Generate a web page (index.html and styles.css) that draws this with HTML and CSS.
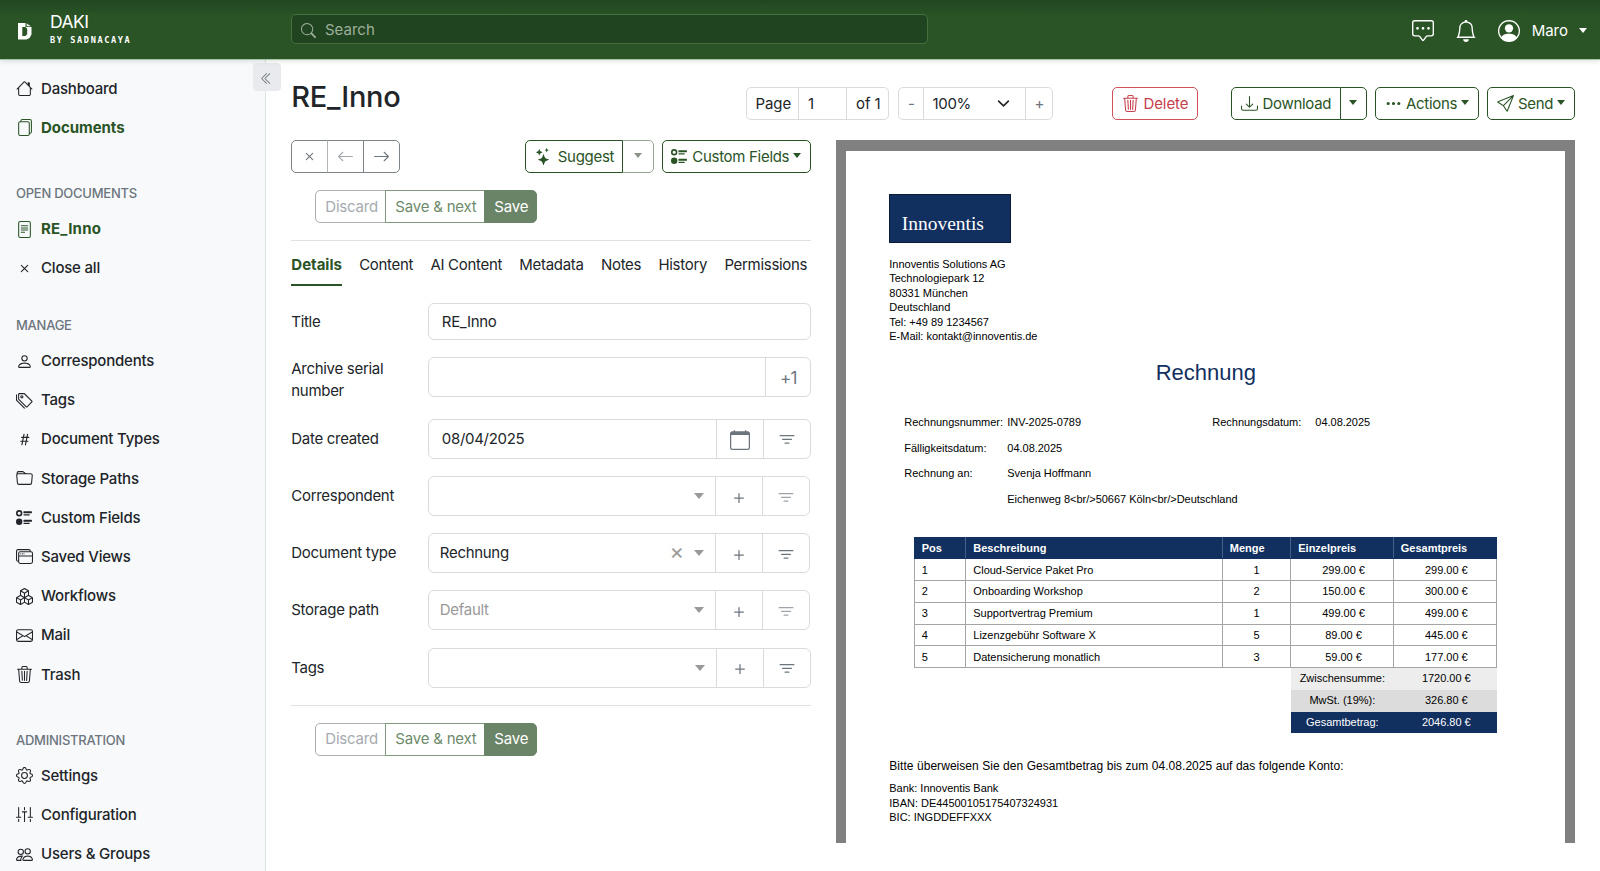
FILE: index.html
```html
<!DOCTYPE html>
<html lang="en">
<head>
<meta charset="utf-8">
<title>RE_Inno - DAKI</title>
<link rel="stylesheet" href="styles.css">
</head>
<body>
<svg class="sprite" aria-hidden="true">
  <symbol id="house" viewBox="0 0 16 16"><path d="M8.707 1.5a1 1 0 0 0-1.414 0L.646 8.146a.5.5 0 0 0 .708.708L2 8.207V13.5A1.5 1.5 0 0 0 3.5 15h9a1.500 1.500 0 0 0 1.500-1.500V8.207l.646.647a.5.5 0 0 0 .708-.708L13 5.793V2.500a.5.5 0 0 0-.5-.5h-1a.5.5 0 0 0-.5.5v1.293zM13 7.207V13.500a.5.5 0 0 1-.5.5h-9a.5.5 0 0 1-.5-.5V7.207l5-5z"/></symbol>
  <symbol id="files" viewBox="0 0 16 16"><path d="M13 0H6a2 2 0 0 0-2 2 2 2 0 0 0-2 2v10a2 2 0 0 0 2 2h7a2 2 0 0 0 2-2 2 2 0 0 0 2-2V2a2 2 0 0 0-2-2m0 13V4a2 2 0 0 0-2-2H5a1 1 0 0 1 1-1h7a1 1 0 0 1 1 1v10a1 1 0 0 1-1 1M3 4a1 1 0 0 1 1-1h7a1 1 0 0 1 1 1v10a1 1 0 0 1-1 1H4a1 1 0 0 1-1-1z"/></symbol>
  <symbol id="file-text" viewBox="0 0 16 16"><path d="M5 4a.5.5 0 0 0 0 1h6a.5.5 0 0 0 0-1zm-.5 2.500A.5.5 0 0 1 5 6h6a.5.5 0 0 1 0 1H5a.5.5 0 0 1-.5-.5M5 8a.5.5 0 0 0 0 1h6a.5.5 0 0 0 0-1zm0 2a.5.5 0 0 0 0 1h3a.5.5 0 0 0 0-1z"/><path d="M2 2a2 2 0 0 1 2-2h8a2 2 0 0 1 2 2v12a2 2 0 0 1-2 2H4a2 2 0 0 1-2-2zm10-1H4a1 1 0 0 0-1 1v12a1 1 0 0 0 1 1h8a1 1 0 0 0 1-1V2a1 1 0 0 0-1-1"/></symbol>
  <symbol id="x" viewBox="0 0 16 16"><path d="M4.646 4.646a.5.5 0 0 1 .708 0L8 7.293l2.646-2.647a.5.5 0 0 1 .708.708L8.707 8l2.647 2.646a.5.5 0 0 1-.708.708L8 8.707l-2.646 2.647a.5.5 0 0 1-.708-.708L7.293 8 4.646 5.354a.5.5 0 0 1 0-.708"/></symbol>
  <symbol id="person" viewBox="0 0 16 16"><path d="M8 8a3 3 0 1 0 0-6 3 3 0 0 0 0 6m2-3a2 2 0 1 1-4 0 2 2 0 0 1 4 0m4 8c0 1-1 1-1 1H3s-1 0-1-1 1-4 6-4 6 3 6 4m-1-.004c-.001-.246-.154-.986-.832-1.664C11.516 10.680 10.289 10 8 10s-3.516.680-4.168 1.332c-.678.678-.830 1.418-.832 1.664z"/></symbol>
  <symbol id="tags" viewBox="0 0 16 16"><path d="M3 2v4.586l7 7L14.586 9l-7-7zM2 2a1 1 0 0 1 1-1h4.586a1 1 0 0 1 .707.293l7 7a1 1 0 0 1 0 1.414l-4.586 4.586a1 1 0 0 1-1.414 0l-7-7A1 1 0 0 1 2 6.586z"/><path d="M5.500 5a.5.5 0 1 1 0-1 .5.5 0 0 1 0 1m0 1a1.500 1.500 0 1 0 0-3 1.500 1.500 0 0 0 0 3M1 7.086a1 1 0 0 0 .293.707L8.750 15.250l-.043.043a1 1 0 0 1-1.414 0l-7-7A1 1 0 0 1 0 7.586V3a1 1 0 0 1 1-1z"/></symbol>
  <symbol id="hash" viewBox="0 0 16 16"><path d="M8.390 12.648a1 1 0 0 0-.015.180c0 .305.210.508.500.508.266 0 .492-.172.555-.477l.554-2.703h1.204c.421 0 .617-.234.617-.547 0-.312-.188-.530-.617-.530h-.985l.516-2.524h1.265c.430 0 .618-.227.618-.547 0-.313-.188-.524-.618-.524h-1.046l.476-2.304a1 1 0 0 0 .016-.164.510.510 0 0 0-.516-.516.540.540 0 0 0-.539.430l-.523 2.554H7.617l.477-2.304c.008-.040.015-.118.015-.164a.510.510 0 0 0-.523-.516.540.540 0 0 0-.531.430L6.530 5.484H5.414c-.430 0-.617.220-.617.532s.187.539.617.539h.906l-.515 2.523H4.609c-.421 0-.609.219-.609.531s.188.547.610.547h.976l-.516 2.492c-.008.040-.015.125-.015.180 0 .305.210.508.500.508.265 0 .492-.172.554-.477l.555-2.703h2.242zm-1-6.109h2.266l-.515 2.563H6.859l.532-2.563z"/></symbol>
  <symbol id="folder" viewBox="0 0 16 16"><path d="M.540 3.870.500 3a2 2 0 0 1 2-2h3.672a2 2 0 0 1 1.414.586l.828.828A2 2 0 0 0 9.828 3h3.982a2 2 0 0 1 1.992 2.181l-.637 7A2 2 0 0 1 13.174 14H2.826a2 2 0 0 1-1.991-1.819l-.637-7a2 2 0 0 1 .342-1.310zM2.190 4a1 1 0 0 0-.996 1.090l.637 7a1 1 0 0 0 .995.910h10.348a1 1 0 0 0 .995-.910l.637-7A1 1 0 0 0 13.810 4zm4.690-1.707A1 1 0 0 0 6.172 2H2.500a1 1 0 0 0-1 .981l.006.139q.323-.119.684-.120h5.396z"/></symbol>
  <symbol id="ui-radios" viewBox="0 0 16 16"><path d="M7 2.500a.5.5 0 0 1 .5-.5h7a.5.5 0 0 1 .5.5v1a.5.5 0 0 1-.5.5h-7a.5.5 0 0 1-.5-.5zM0 12a3 3 0 1 1 6 0 3 3 0 0 1-6 0m7-1.500a.5.5 0 0 1 .5-.5h7a.5.5 0 0 1 .5.5v1a.5.5 0 0 1-.5.5h-7a.5.5 0 0 1-.5-.5zm0-5a.5.5 0 0 1 .5-.5h5a.5.5 0 0 1 0 1h-5a.5.5 0 0 1-.5-.5m0 8a.5.5 0 0 1 .5-.5h5a.5.5 0 0 1 0 1h-5a.5.5 0 0 1-.5-.5M3 1a3 3 0 1 0 0 6 3 3 0 0 0 0-6m0 4.500a1.500 1.500 0 1 1 0-3 1.500 1.500 0 0 1 0 3"/></symbol>
  <symbol id="window-stack" viewBox="0 0 16 16"><path d="M4.500 6a.5.5 0 1 0 0-1 .5.5 0 0 0 0 1M6 6a.5.5 0 1 0 0-1 .5.5 0 0 0 0 1m2-.5a.5.5 0 1 1-1 0 .5.5 0 0 1 1 0"/><path d="M12 1a2 2 0 0 1 2 2 2 2 0 0 1 2 2v8a2 2 0 0 1-2 2H4a2 2 0 0 1-2-2 2 2 0 0 1-2-2V3a2 2 0 0 1 2-2zM2 12V5a2 2 0 0 1 2-2h9a1 1 0 0 0-1-1H2a1 1 0 0 0-1 1v8a1 1 0 0 0 1 1m1-4v5a1 1 0 0 0 1 1h10a1 1 0 0 0 1-1V8zm12-1V5a1 1 0 0 0-1-1H4a1 1 0 0 0-1 1v2z"/></symbol>
  <symbol id="boxes" viewBox="0 0 16 16"><path d="M7.752.066a.5.5 0 0 1 .496 0l3.750 2.143a.5.5 0 0 1 .252.434v3.995l3.498 2A.5.5 0 0 1 16 9.070v4.286a.5.5 0 0 1-.252.434l-3.750 2.143a.5.5 0 0 1-.496 0l-3.502-2-3.502 2.001a.5.5 0 0 1-.496 0l-3.750-2.143A.5.5 0 0 1 0 13.357V9.071a.5.5 0 0 1 .252-.434L3.750 6.638V2.643a.5.5 0 0 1 .252-.434zM4.250 7.504 1.508 9.071l2.742 1.567 2.742-1.567zM7.500 9.933l-2.750 1.571v3.134l2.750-1.571zm1 3.134 2.750 1.571v-3.134L8.500 9.933zm.508-3.996 2.742 1.567 2.742-1.567-2.742-1.567zm2.242-2.433V3.504L8.500 5.076V8.210zM7.500 8.210V5.076L4.750 3.504v3.134zM5.258 2.643 8 4.210l2.742-1.567L8 1.076zM15 9.933l-2.750 1.571v3.134L15 13.067zM3.750 14.638v-3.134L1 9.933v3.134z"/></symbol>
  <symbol id="envelope" viewBox="0 0 16 16"><path d="M0 4a2 2 0 0 1 2-2h12a2 2 0 0 1 2 2v8a2 2 0 0 1-2 2H2a2 2 0 0 1-2-2zm2-1a1 1 0 0 0-1 1v.217l7 4.200 7-4.200V4a1 1 0 0 0-1-1zm13 2.383-4.708 2.825L15 11.105zm-.034 6.876-5.640-3.471L8 9.583l-1.326-.795-5.640 3.470A1 1 0 0 0 2 13h12a1 1 0 0 0 .966-.741M1 11.105l4.708-2.897L1 5.383z"/></symbol>
  <symbol id="trash" viewBox="0 0 16 16"><path d="M6.500 1h3a.5.5 0 0 1 .5.5v1H6v-1a.5.5 0 0 1 .5-.5M11 2.500v-1A1.500 1.500 0 0 0 9.500 0h-3A1.500 1.500 0 0 0 5 1.500v1H1.500a.5.5 0 0 0 0 1h.538l.853 10.660A2 2 0 0 0 4.885 16h6.230a2 2 0 0 0 1.994-1.840l.853-10.660h.538a.5.5 0 0 0 0-1zm1.958 1-.846 10.580a1 1 0 0 1-.997.920h-6.230a1 1 0 0 1-.997-.920L3.042 3.500zm-7.487 1a.5.5 0 0 1 .528.470l.500 8.500a.5.5 0 0 1-.998.060L5 5.030a.5.5 0 0 1 .470-.530m5.058 0a.5.5 0 0 1 .470.530l-.500 8.500a.5.5 0 1 1-.998-.060l.500-8.500a.5.5 0 0 1 .528-.470M8 4.500a.5.5 0 0 1 .5.5v8.500a.5.5 0 0 1-1 0V5a.5.5 0 0 1 .5-.5"/></symbol>
  <symbol id="gear" viewBox="0 0 16 16"><path d="M8 4.754a3.246 3.246 0 1 0 0 6.492 3.246 3.246 0 0 0 0-6.492M5.754 8a2.246 2.246 0 1 1 4.492 0 2.246 2.246 0 0 1-4.492 0"/><path d="M9.796 1.343c-.527-1.790-3.065-1.790-3.592 0l-.094.319a.873.873 0 0 1-1.255.520l-.292-.160c-1.640-.892-3.433.902-2.540 2.541l.159.292a.873.873 0 0 1-.520 1.255l-.319.094c-1.790.527-1.790 3.065 0 3.592l.319.094a.873.873 0 0 1 .520 1.255l-.160.292c-.892 1.640.901 3.434 2.541 2.540l.292-.159a.873.873 0 0 1 1.255.520l.094.319c.527 1.790 3.065 1.790 3.592 0l.094-.319a.873.873 0 0 1 1.255-.520l.292.160c1.640.893 3.434-.902 2.540-2.541l-.159-.292a.873.873 0 0 1 .520-1.255l.319-.094c1.790-.527 1.790-3.065 0-3.592l-.319-.094a.873.873 0 0 1-.520-1.255l.160-.292c.893-1.640-.902-3.433-2.541-2.540l-.292.159a.873.873 0 0 1-1.255-.520zm-2.633.283c.246-.835 1.428-.835 1.674 0l.094.319a1.873 1.873 0 0 0 2.693 1.115l.291-.160c.764-.415 1.600.420 1.184 1.185l-.159.292a1.873 1.873 0 0 0 1.116 2.692l.318.094c.835.246.835 1.428 0 1.674l-.319.094a1.873 1.873 0 0 0-1.115 2.693l.160.291c.415.764-.420 1.600-1.185 1.184l-.291-.159a1.873 1.873 0 0 0-2.693 1.116l-.094.318c-.246.835-1.428.835-1.674 0l-.094-.319a1.873 1.873 0 0 0-2.692-1.115l-.292.160c-.764.415-1.600-.420-1.184-1.185l.159-.291A1.873 1.873 0 0 0 1.945 8.930l-.319-.094c-.835-.246-.835-1.428 0-1.674l.319-.094A1.873 1.873 0 0 0 3.060 4.377l-.160-.292c-.415-.764.420-1.600 1.185-1.184l.292.159a1.873 1.873 0 0 0 2.692-1.115z"/></symbol>
  <symbol id="sliders" viewBox="0 0 16 16"><path d="M0 10.500a.5.5 0 0 0 .5.5h4a.5.5 0 0 0 0-1H3V1.500a.5.5 0 0 0-1 0V10H.5a.5.5 0 0 0-.5.5M2.500 12a.5.5 0 0 0-.5.5v2a.5.5 0 0 0 1 0v-2a.5.5 0 0 0-.5-.5m3-6.500A.5.5 0 0 0 6 6h1.500v8.500a.5.5 0 0 0 1 0V6H10a.5.5 0 0 0 0-1H6a.5.5 0 0 0-.5.5M8 1a.5.5 0 0 0-.5.5v2a.5.5 0 0 0 1 0v-2A.5.5 0 0 0 8 1m3 9.500a.5.5 0 0 0 .5.5h4a.5.5 0 0 0 0-1H14V1.500a.5.5 0 0 0-1 0V10h-1.500a.5.5 0 0 0-.5.5m2.500 1.500a.5.5 0 0 0-.5.5v2a.5.5 0 0 0 1 0v-2a.5.5 0 0 0-.5-.5"/></symbol>
  <symbol id="people" viewBox="0 0 16 16"><path d="M15 14s1 0 1-1-1-4-5-4-5 3-5 4 1 1 1 1zm-7.978-1L7 12.996c.001-.264.167-1.030.760-1.720C8.312 10.629 9.282 10 11 10c1.717 0 2.687.630 3.240 1.276.593.690.758 1.457.760 1.720l-.008.002-.014.002zM11 7a2 2 0 1 0 0-4 2 2 0 0 0 0 4m3-2a3 3 0 1 1-6 0 3 3 0 0 1 6 0M6.936 9.280a6 6 0 0 0-1.230-.247A7 7 0 0 0 5 9c-4 0-5 3-5 4q0 1 1 1h4.216A2.240 2.240 0 0 1 5 13c0-1.010.377-2.042 1.090-2.904.243-.294.526-.569.846-.816M4.920 10A5.500 5.500 0 0 0 4 13H1c0-.260.164-1.030.760-1.724.545-.636 1.492-1.256 3.160-1.275ZM1.500 5.500a3 3 0 1 1 6 0 3 3 0 0 1-6 0m3-2a2 2 0 1 0 0 4 2 2 0 0 0 0-4"/></symbol>
  <symbol id="chevrons" viewBox="0 0 16 16"><path d="M8.354 1.646a.5.5 0 0 1 0 .708L2.707 8l5.647 5.646a.5.5 0 0 1-.708.708l-6-6a.5.5 0 0 1 0-.708l6-6a.5.5 0 0 1 .708 0"/><path d="M12.354 1.646a.5.5 0 0 1 0 .708L6.707 8l5.647 5.646a.5.5 0 0 1-.708.708l-6-6a.5.5 0 0 1 0-.708l6-6a.5.5 0 0 1 .708 0"/></symbol>
  <symbol id="search" viewBox="0 0 16 16"><path d="M11.742 10.344a6.500 6.500 0 1 0-1.397 1.398h-.001q.044.060.098.115l3.850 3.850a1 1 0 0 0 1.415-1.414l-3.850-3.850a1 1 0 0 0-.115-.100zM12 6.500a5.500 5.500 0 1 1-11 0 5.500 5.500 0 0 1 11 0"/></symbol>
  <symbol id="chat" viewBox="0 0 16 16"><path d="M14 1a1 1 0 0 1 1 1v8a1 1 0 0 1-1 1h-2.500a2 2 0 0 0-1.600.800L8 14.333 6.100 11.800a2 2 0 0 0-1.600-.800H2a1 1 0 0 1-1-1V2a1 1 0 0 1 1-1zM2 0a2 2 0 0 0-2 2v8a2 2 0 0 0 2 2h2.500a1 1 0 0 1 .800.400l1.900 2.533a1 1 0 0 0 1.600 0l1.900-2.533a1 1 0 0 1 .800-.400H14a2 2 0 0 0 2-2V2a2 2 0 0 0-2-2z"/><path d="M5 6a1 1 0 1 1-2 0 1 1 0 0 1 2 0m4 0a1 1 0 1 1-2 0 1 1 0 0 1 2 0m4 0a1 1 0 1 1-2 0 1 1 0 0 1 2 0"/></symbol>
  <symbol id="bell" viewBox="0 0 16 16"><path d="M8 16a2 2 0 0 0 2-2H6a2 2 0 0 0 2 2M8 1.918l-.797.161A4 4 0 0 0 4 6c0 .628-.134 2.197-.459 3.742-.160.767-.376 1.566-.663 2.258h10.244c-.287-.692-.502-1.490-.663-2.258C12.134 8.197 12 6.628 12 6a4 4 0 0 0-3.203-3.920zM14.220 12c.223.447.481.801.780 1H1c.299-.199.557-.553.780-1C2.680 10.200 3 6.880 3 6c0-2.420 1.720-4.440 4.005-4.901a1 1 0 1 1 1.990 0A5 5 0 0 1 13 6c0 .880.320 4.200 1.220 6"/></symbol>
  <symbol id="person-circle" viewBox="0 0 16 16"><path d="M11 6a3 3 0 1 1-6 0 3 3 0 0 1 6 0"/><path fill-rule="evenodd" d="M0 8a8 8 0 1 1 16 0A8 8 0 0 1 0 8m8-7a7 7 0 0 0-5.468 11.370C3.242 11.226 4.805 10 8 10s4.757 1.225 5.468 2.370A7 7 0 0 0 8 1"/></symbol>
  <symbol id="arrow-left" viewBox="0 0 16 16"><path fill-rule="evenodd" d="M15 8a.5.5 0 0 0-.5-.5H2.707l3.147-3.146a.5.5 0 1 0-.708-.708l-4 4a.5.5 0 0 0 0 .708l4 4a.5.5 0 0 0 .708-.708L2.707 8.500H14.500A.5.5 0 0 0 15 8"/></symbol>
  <symbol id="arrow-right" viewBox="0 0 16 16"><path fill-rule="evenodd" d="M1 8a.5.5 0 0 1 .5-.5h11.793l-3.147-3.146a.5.5 0 0 1 .708-.708l4 4a.5.5 0 0 1 0 .708l-4 4a.5.5 0 0 1-.708-.708L13.293 8.500H1.500A.5.5 0 0 1 1 8"/></symbol>
  <symbol id="stars" viewBox="0 0 16 16"><path d="M7.657 6.247c.110-.330.576-.330.686 0l.645 1.937a2.890 2.890 0 0 0 1.829 1.828l1.936.645c.330.110.330.576 0 .686l-1.937.645a2.890 2.890 0 0 0-1.828 1.829l-.645 1.936a.361.361 0 0 1-.686 0l-.645-1.937a2.890 2.890 0 0 0-1.828-1.828l-1.937-.645a.361.361 0 0 1 0-.686l1.937-.645a2.890 2.890 0 0 0 1.828-1.828zM3.794 1.148a.217.217 0 0 1 .412 0l.387 1.162c.173.518.579.924 1.097 1.097l1.162.387a.217.217 0 0 1 0 .412l-1.162.387A1.730 1.730 0 0 0 4.593 5.690l-.387 1.162a.217.217 0 0 1-.412 0L3.407 5.690A1.730 1.730 0 0 0 2.310 4.593l-1.162-.387a.217.217 0 0 1 0-.412l1.162-.387A1.730 1.730 0 0 0 3.407 2.310zM10.863.099a.145.145 0 0 1 .274 0l.258.774c.115.346.386.617.732.732l.774.258a.145.145 0 0 1 0 .274l-.774.258a1.160 1.160 0 0 0-.732.732l-.258.774a.145.145 0 0 1-.274 0l-.258-.774a1.160 1.160 0 0 0-.732-.732L9.100 2.137a.145.145 0 0 1 0-.274l.774-.258c.346-.115.617-.386.732-.732z"/></symbol>
  <symbol id="download" viewBox="0 0 16 16"><path d="M.5 9.900a.5.5 0 0 1 .5.5v2.500a1 1 0 0 0 1 1h12a1 1 0 0 0 1-1v-2.500a.5.5 0 0 1 1 0v2.500a2 2 0 0 1-2 2H2a2 2 0 0 1-2-2v-2.500a.5.5 0 0 1 .5-.5"/><path d="M7.646 11.854a.5.5 0 0 0 .708 0l3-3a.5.5 0 0 0-.708-.708L8.500 10.293V1.500a.5.5 0 0 0-1 0v8.793L5.354 8.146a.5.5 0 1 0-.708.708z"/></symbol>
  <symbol id="dots" viewBox="0 0 16 16"><path d="M3 9.500a1.500 1.500 0 1 1 0-3 1.500 1.500 0 0 1 0 3m5 0a1.500 1.500 0 1 1 0-3 1.500 1.500 0 0 1 0 3m5 0a1.500 1.500 0 1 1 0-3 1.500 1.500 0 0 1 0 3"/></symbol>
  <symbol id="send" viewBox="0 0 16 16"><path d="M15.854.146a.5.5 0 0 1 .110.540l-5.819 14.547a.750.750 0 0 1-1.329.124l-3.178-4.995L.643 7.184a.750.750 0 0 1 .124-1.330L15.314.037a.5.5 0 0 1 .540.110ZM6.636 10.070l2.761 4.338L14.130 2.576zm6.787-8.201L1.591 6.602l4.339 2.760z"/></symbol>
  <symbol id="calendar" viewBox="0 0 16 16"><path d="M3.500 0a.5.5 0 0 1 .5.5V1h8V.5a.5.5 0 0 1 1 0V1h1a2 2 0 0 1 2 2v11a2 2 0 0 1-2 2H2a2 2 0 0 1-2-2V3a2 2 0 0 1 2-2h1V.5a.5.5 0 0 1 .5-.5M1 4v10a1 1 0 0 0 1 1h12a1 1 0 0 0 1-1V4z"/></symbol>
  <symbol id="filter" viewBox="0 0 16 16"><path d="M6 10.500a.5.5 0 0 1 .5-.5h3a.5.5 0 0 1 0 1h-3a.5.5 0 0 1-.5-.5m-2-3a.5.5 0 0 1 .5-.5h7a.5.5 0 0 1 0 1h-7a.5.5 0 0 1-.5-.5m-2-3a.5.5 0 0 1 .5-.5h11a.5.5 0 0 1 0 1h-11a.5.5 0 0 1-.5-.5"/></symbol>
  <symbol id="plus" viewBox="0 0 16 16"><path d="M8 4a.5.5 0 0 1 .5.5v3h3a.5.5 0 0 1 0 1h-3v3a.5.5 0 0 1-1 0v-3h-3a.5.5 0 0 1 0-1h3v-3A.5.5 0 0 1 8 4"/></symbol>
  <symbol id="chevron-down" viewBox="0 0 16 16"><path fill="none" stroke="currentColor" stroke-width="2" stroke-linecap="round" stroke-linejoin="round" d="m2 5 6 6 6-6"/></symbol>
</svg>

<header class="topbar">
  <a class="brand">
    <svg class="brand-mark" viewBox="0 0 14 18"><path fill="#fff" fill-rule="evenodd" d="M0 1h7.500v4h6v7.500l-2 3.500-3 1.500H0zM4.300 5v9h3l1.900-1.800V6.800L7.500 5z"/><path fill="#e3ebe2" d="M8.600 1.200 13 4.300H8.600z"/></svg>
    <span class="brand-text"><span class="brand-name">DAKI</span><span class="brand-by">BY SADNACAYA</span></span>
  </a>
  <div class="search"><svg class="icon"><use href="#search"/></svg><span>Search</span></div>
  <div class="top-actions">
    <svg class="icon-lg"><use href="#chat"/></svg>
    <svg class="icon-lg"><use href="#bell"/></svg>
    <div class="user"><svg class="icon-lg"><use href="#person-circle"/></svg><span>Maro</span><i class="caret"></i></div>
  </div>
</header>

<div class="shell">
  <nav class="sidebar">
    <button class="collapse"><svg class="icon"><use href="#chevrons"/></svg></button>
    <ul>
      <li><svg class="icon"><use href="#house"/></svg><span>Dashboard</span></li>
      <li class="active"><svg class="icon"><use href="#files"/></svg><span>Documents</span></li>
    </ul>
    <h6 class="head-open">Open documents</h6>
    <ul>
      <li class="active wide"><svg class="icon"><use href="#file-text"/></svg><span>RE_Inno</span></li>
      <li><svg class="icon"><use href="#x"/></svg><span>Close all</span></li>
    </ul>
    <h6 class="head-manage">Manage</h6>
    <ul>
      <li><svg class="icon"><use href="#person"/></svg><span>Correspondents</span></li>
      <li><svg class="icon"><use href="#tags"/></svg><span>Tags</span></li>
      <li><svg class="icon"><use href="#hash"/></svg><span>Document Types</span></li>
      <li><svg class="icon"><use href="#folder"/></svg><span>Storage Paths</span></li>
      <li><svg class="icon"><use href="#ui-radios"/></svg><span>Custom Fields</span></li>
      <li><svg class="icon"><use href="#window-stack"/></svg><span>Saved Views</span></li>
      <li><svg class="icon"><use href="#boxes"/></svg><span>Workflows</span></li>
      <li><svg class="icon"><use href="#envelope"/></svg><span>Mail</span></li>
      <li><svg class="icon"><use href="#trash"/></svg><span>Trash</span></li>
    </ul>
    <h6 class="head-admin">Administration</h6>
    <ul>
      <li><svg class="icon"><use href="#gear"/></svg><span>Settings</span></li>
      <li><svg class="icon"><use href="#sliders"/></svg><span>Configuration</span></li>
      <li><svg class="icon"><use href="#people"/></svg><span>Users &amp; Groups</span></li>
    </ul>
  </nav>

  <main>
    <div class="page-head">
      <h1>RE_Inno</h1>
      <div class="group page-group"><span class="cell w-page">Page</span><span class="cell w-num">1</span><span class="cell w-of">of 1</span></div>
      <div class="group zoom-group"><span class="cell w-minus muted">-</span><span class="cell w-zoom">100%<svg class="chev"><use href="#chevron-down"/></svg></span><span class="cell w-plus muted">+</span></div>
      <button class="btn danger w-delete"><svg class="icon"><use href="#trash"/></svg>Delete</button>
      <div class="btn-group dl"><button class="btn w-download"><svg class="icon"><use href="#download"/></svg>Download</button><button class="btn w-split"><i class="caret"></i></button></div>
      <button class="btn w-actions"><svg class="icon"><use href="#dots"/></svg>Actions<i class="caret"></i></button>
      <button class="btn w-send"><svg class="icon"><use href="#send"/></svg>Send<i class="caret"></i></button>
    </div>

    <div class="columns">
      <section class="details">
        <div class="tools">
          <div class="btn-group nav-group"><button class="btn gray"><svg class="icon"><use href="#x"/></svg></button><button class="btn gray off"><svg class="icon"><use href="#arrow-left"/></svg></button><button class="btn gray"><svg class="icon"><use href="#arrow-right"/></svg></button></div>
          <div class="btn-group suggest-group"><button class="btn w-suggest"><svg class="icon"><use href="#stars"/></svg>Suggest</button><button class="btn w-sugsplit off-gray"><i class="caret"></i></button></div>
          <button class="btn w-fields"><svg class="icon"><use href="#ui-radios"/></svg>Custom Fields<i class="caret"></i></button>
        </div>
        <div class="btn-group save-group"><button class="btn discard">Discard</button><button class="btn save-next">Save &amp; next</button><button class="btn save">Save</button></div>
        <div class="tabs"><a class="on">Details</a><a>Content</a><a>AI Content</a><a>Metadata</a><a>Notes</a><a>History</a><a>Permissions</a></div>

        <div class="form">
          <label>Title</label>
          <div class="field short"><span class="value">RE_Inno</span></div>
          <label>Archive serial number</label>
          <div class="field asn"><span class="value"></span><span class="add big">+1</span></div>
          <label>Date created</label>
          <div class="field"><span class="value">08/04/2025</span><span class="add"><svg class="icon-cal"><use href="#calendar"/></svg></span><span class="add"><svg class="icon-f"><use href="#filter"/></svg></span></div>
          <label>Correspondent</label>
          <div class="field select"><span class="value"></span><i class="tri"></i><span class="add"><svg class="icon-f"><use href="#plus"/></svg></span><span class="add faded"><svg class="icon-f"><use href="#filter"/></svg></span></div>
          <label>Document type</label>
          <div class="field select"><span class="value">Rechnung</span><span class="clear">×</span><i class="tri"></i><span class="add"><svg class="icon-f"><use href="#plus"/></svg></span><span class="add"><svg class="icon-f"><use href="#filter"/></svg></span></div>
          <label>Storage path</label>
          <div class="field select"><span class="value placeholder">Default</span><i class="tri"></i><span class="add"><svg class="icon-f"><use href="#plus"/></svg></span><span class="add faded"><svg class="icon-f"><use href="#filter"/></svg></span></div>
          <label>Tags</label>
          <div class="field"><span class="value"></span><i class="tri"></i><span class="add"><svg class="icon-f"><use href="#plus"/></svg></span><span class="add"><svg class="icon-f"><use href="#filter"/></svg></span></div>
        </div>
        <div class="btn-group save-group bottom"><button class="btn discard">Discard</button><button class="btn save-next">Save &amp; next</button><button class="btn save">Save</button></div>
      </section>

      <section class="viewer">
        <article class="sheet">
          <div class="logo">Innoventis</div>
          <p class="address">Innoventis Solutions AG<br>Technologiepark 12<br>80331 München<br>Deutschland<br>Tel: +49 89 1234567<br>E-Mail: kontakt@innoventis.de</p>
          <h2>Rechnung</h2>
          <div class="meta">
            <span>Rechnungsnummer:</span><span>INV-2025-0789</span><span>Rechnungsdatum:</span><span>04.08.2025</span>
            <span>Fälligkeitsdatum:</span><span class="rest">04.08.2025</span>
            <span>Rechnung an:</span><span class="rest">Svenja Hoffmann</span>
            <span></span><span class="rest">Eichenweg 8&lt;br/&gt;50667 Köln&lt;br/&gt;Deutschland</span>
          </div>
          <table>
            <colgroup><col class="c1"><col class="c2"><col class="c3"><col class="c4"><col class="c5"></colgroup>
            <tr><th>Pos</th><th>Beschreibung</th><th>Menge</th><th>Einzelpreis</th><th>Gesamtpreis</th></tr>
            <tr><td>1</td><td>Cloud-Service Paket Pro</td><td>1</td><td>299.00 €</td><td>299.00 €</td></tr>
            <tr><td>2</td><td>Onboarding Workshop</td><td>2</td><td>150.00 €</td><td>300.00 €</td></tr>
            <tr><td>3</td><td>Supportvertrag Premium</td><td>1</td><td>499.00 €</td><td>499.00 €</td></tr>
            <tr><td>4</td><td>Lizenzgebühr Software X</td><td>5</td><td>89.00 €</td><td>445.00 €</td></tr>
            <tr><td>5</td><td>Datensicherung monatlich</td><td>3</td><td>59.00 €</td><td>177.00 €</td></tr>
          </table>
          <div class="sums">
            <div class="s1"><span>Zwischensumme:</span><span>1720.00 €</span></div>
            <div class="s2"><span>MwSt. (19%):</span><span>326.80 €</span></div>
            <div class="s3"><span>Gesamtbetrag:</span><span>2046.80 €</span></div>
          </div>
          <p class="pay">Bitte überweisen Sie den Gesamtbetrag bis zum 04.08.2025 auf das folgende Konto:</p>
          <p class="bank">Bank: Innoventis Bank<br>IBAN: DE44500105175407324931<br>BIC: INGDDEFFXXX</p>
        </article>
      </section>
    </div>
  </main>
</div>
</body>
</html>
```
FILE: styles.css
```css
* { box-sizing: border-box; }
body { margin: 0; width: 1600px; height: 871px; overflow: hidden; background: #fff; color: #212529; font: 15px/22px Inter, sans-serif; letter-spacing: -.3px; }
ul, h1, h2, h6, p { margin: 0; padding: 0; }
.sprite { display: none; }
svg { fill: currentColor; flex: none; }
.icon { width: 17px; height: 17px; }
.icon-lg { width: 22px; height: 22px; }
.caret { flex: none; width: 0; height: 0; border: 4.5px solid transparent; border-width: 5px 4.700px 0; border-top-color: currentColor; }
button { font: inherit; letter-spacing: inherit; margin: 0; }

.topbar { height: 60px; display: flex; align-items: center; background: linear-gradient(#214620 0, #2a5426 16px); border-bottom: 1px solid #a9c6a8; color: #fff; box-shadow: 0 1px 5px rgba(42, 84, 38, .18); position: relative; z-index: 2; }
.brand { width: 291px; padding-left: 18px; display: flex; align-items: center; }
.brand-mark { width: 14px; height: 18px; margin-top: 2px; }
.brand-text { margin: 1px 0 0 18px; display: flex; flex-direction: column; }
.brand-name { font-size: 17.500px; line-height: 20px; letter-spacing: -.550px; }
.brand-by { font: 8.600px/17px "DejaVu Sans Mono", monospace; font-weight: 700; letter-spacing: 1.600px; }
.search { width: 637px; height: 30px; margin-top: -2px; padding: 0 9px; display: flex; align-items: center; gap: 9px; border: 1px solid #44703f; border-radius: 5px; background: #214420; color: #9cae9b; letter-spacing: 0; }
.search .icon { width: 15px; height: 15px; margin-top: 3px; }
.search span { margin-top: 2px; }
.top-actions { margin: 2px 0 0 auto; padding-right: 13px; display: flex; align-items: center; gap: 21px; }
.user { display: flex; align-items: center; gap: 12px; }
.user span { letter-spacing: 0; }
.user .caret { margin-left: -1px; }

.shell { display: flex; height: 811px; }
.sidebar { position: relative; width: 266px; flex: none; padding-top: 9px; background: #f8f9fb; border-right: 1px solid #dfe3e0; font-weight: 500; }
.sidebar ul { list-style: none; }
.sidebar li { height: 39.200px; padding-left: 16px; display: flex; align-items: center; gap: 8px; letter-spacing: -.2px; }
.active { color: #2a5426; font-weight: 700; }
.sidebar .active { letter-spacing: -.05px; }
.sidebar .wide { letter-spacing: .2px; }
.sidebar h6 { padding-left: 16px; font-size: 13px; line-height: 16px; font-weight: 500; letter-spacing: -.25px; text-transform: uppercase; color: #6c757d; }
.head-open { margin: 38px 0 8.200px; }
.head-manage { margin: 29px 0 8.500px; }
.head-admin { margin: 38px 0 8px; }
.collapse { position: absolute; top: 3px; right: -16px; width: 28px; height: 28px; border: 0; border-radius: 4px; background: #e9eaee; color: #6c757d; display: grid; place-items: center; padding: 0; }
.collapse .icon { width: 13px; height: 13px; margin: 3px 0 0 -1px; }

main { flex: 1; padding: 27px 25px 0 25.300px; }
.page-head { display: flex; height: 33px; }
h1 { width: 454.700px; flex: none; font-size: 29px; line-height: 20px; font-weight: 500; letter-spacing: -.25px; }
.group { display: flex; height: 33px; border: 1px solid #d9dcdf; border-radius: 5px; }
.cell { display: flex; align-items: center; padding-left: 9px; border-left: 1px solid #d9dcdf; }
.cell:first-child { border-left: 0; padding-left: 8.500px; }
.muted { color: #6c757d; }
.w-page { width: 51px; } .w-num { width: 48.500px; } .w-of { width: 42px; padding-left: 8.500px; }
.page-group .cell { letter-spacing: -.1px; }
.zoom-group { margin-left: 9px; }
.w-minus { width: 24px; } .w-zoom { width: 102px; padding-left: 8px; } .w-plus { width: 27px; padding-left: 8px; }
.chev { width: 13px; height: 13px; margin-left: auto; margin-right: 15px; }
.btn { height: 33px; flex: none; padding: 0 8px; display: flex; align-items: center; gap: 4px; border: 1px solid #2a5426; border-radius: 5px; background: #fff; color: #2a5426; white-space: nowrap; }
.btn-group { display: flex; flex: none; }
.btn-group .btn + .btn { margin-left: -1px; border-top-left-radius: 0; border-bottom-left-radius: 0; }
.btn-group .btn:not(:last-child) { border-top-right-radius: 0; border-bottom-right-radius: 0; }
.btn .caret { margin: -2px 0 0 0; }
.danger { color: #c6404b; border-color: #cf5059; }
.w-delete { width: 86px; margin-left: 59px; padding-left: 9px; letter-spacing: -.1px; }
.dl { margin-left: 33px; }
.w-download { width: 109.500px; padding-left: 9px; }
.w-split { width: 27px; padding: 0; justify-content: center; }
.w-actions { width: 104px; margin-left: 8px; padding-left: 9px; }
.w-send { width: 88px; margin-left: 8px; padding-left: 9px; }

.columns { display: flex; margin-top: 20px; }
.details { width: 520px; flex: none; }
.tools { display: flex; }
.nav-group .btn { width: 37px; padding: 0; justify-content: center; }
.gray { color: #6c757d; border-color: #7c8389; }
.off { color: #a3a8ad; border-left-color: #b2b6ba; }
.suggest-group { margin-left: auto; }
.w-suggest { width: 98.500px; padding-left: 9px; gap: 6px; z-index: 1; }
.w-sugsplit { width: 31.500px; padding: 0; justify-content: center; }
.off-gray { color: #8b9389; border-color: #94a892; }
.w-fields { width: 149.500px; margin-left: 8px; padding-left: 8.500px; }
.save-group { margin: 17px 0 0 24px; }
.save-group .btn { padding-left: 9px; letter-spacing: -.2px; }
.discard { width: 71px; color: #a6abb0; border-color: #a9b0ae; }
.save-next { width: 100px; color: #6d8b6b; border-color: #7f997d; }
.save { width: 53px; color: #fff; background: #6a8467; border-color: #6a8467; }
.tabs { display: flex; justify-content: space-between; margin-top: 17px; padding: 13px 4px 0 0; border-top: 1px solid #dee2e6; height: 46px; }
.tabs a { height: 32px; white-space: nowrap; }
.tabs .on { color: #2a5426; font-weight: 700; letter-spacing: 0; border-bottom: 2px solid #2a5426; }
.form { display: grid; grid-template-columns: 137px 383px; grid-template-rows: 37px 44.500px 40px 40px 40px 40px 40px; row-gap: 17.200px; align-items: center; margin-top: 17px; padding-bottom: 17px; border-bottom: 1px solid #dee2e6; }
.form label { padding-right: 20px; }
.form label:nth-of-type(2) { padding-top: 2px; }
.field { height: 40px; display: flex; align-items: center; border: 1px solid #d9dcdf; border-radius: 6px; }
.short { height: 37.500px; }
.field.asn { align-self: start; }
.field.select { width: 381.500px; }
.value { flex: 1; padding-left: 12.500px; }
.select .value { padding-left: 10.500px; }
.placeholder { color: #999; }
.add { width: 47px; height: 38px; border-left: 1px solid #d9dcdf; display: grid; place-items: center; color: #6c757d; }
.add.big { width: 45px; font-size: 17px; padding-top: 2px; letter-spacing: -.8px; }
.faded svg { opacity: .65; }
.icon-cal { width: 20px; height: 20px; margin-top: 3px; }
.icon-f { width: 20px; height: 20px; margin-top: 3px; }
.tri { border: 5px solid transparent; border-width: 6px 5px 0; border-top-color: #999; margin-right: 11px; }
.clear { font-size: 22px; line-height: 20px; color: #999; margin: -4px 10px 0 0; }

.viewer { width: 738.500px; height: 703px; margin-left: 25px; background: #808080; padding: 10.500px 10px 0 9.500px; overflow: hidden; }
.sheet { height: 693px; background: #fff; padding: 43px 43px 0; color: #000; font: 11px/14.500px "Liberation Sans", Arial, sans-serif; letter-spacing: -.02px; }
.logo { width: 122px; height: 49px; border: 1px solid #0a1a38; background: #12305f; color: #fff; font: 19.500px/58px "Liberation Serif", serif; padding-left: 12px; }
.address { margin: 14px 0 0 .500px; }
h2 { margin-top: 17px; padding-left: 1px; text-align: center; color: #12305f; font-size: 22px; line-height: 24px; font-weight: 400; letter-spacing: 0; }
.meta { display: grid; grid-template-columns: 103px 205px 103px 1fr; grid-auto-rows: 25.500px; align-items: center; margin: 25px 0 0 15.500px; white-space: nowrap; }
.rest { grid-column: 2 / 5; }
table { margin: 25px 0 0 25px; width: 583px; border-collapse: collapse; table-layout: fixed; }
.c1 { width: 51.500px; } .c2 { width: 256.500px; } .c3 { width: 68.500px; } .c4 { width: 102.500px; }
td, th { height: 21.800px; padding: 0 7px; border: 1px solid #a5a5a5; line-height: 16px; text-align: center; }
td:nth-child(n+4) { padding: 0 5px 0 8px; }
th { background: #12305f; color: #fff; text-align: left; border-color: #12305f; border-right-color: #46608a; }
th:last-child { border-right-color: #12305f; }
td:first-child, td:nth-child(2) { text-align: left; }
.sums { width: 206px; margin-left: 402px; }
.sums div { display: grid; grid-template-columns: 103px 103px; height: 21.700px; line-height: 21px; text-align: center; }
.sums span + span { padding-left: 2px; }
.s1 { background: #ededed; } .s2 { background: #dcdcdc; } .s3 { background: #12305f; color: #fff; }
.pay { margin: 25px 0 0 .500px; font-size: 12px; line-height: 16px; letter-spacing: .050px; }
.bank { margin: 7px 0 0 .500px; }
```
